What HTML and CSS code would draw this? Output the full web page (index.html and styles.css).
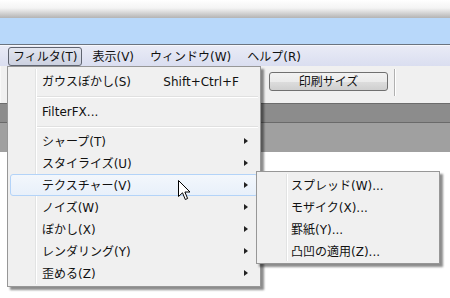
FILE: index.html
```html
<!DOCTYPE html>
<html lang="ja">
<head>
  <meta charset="UTF-8" />
  <title>フィルタ メニュー</title>
  <link rel="stylesheet" href="styles.css">
</head>
<body>
  <div class="window">
    <div class="frame-edge"></div>
    <div class="banner"></div>

    <div class="menubar">
      <span class="menubar-item open">フィルタ(T)</span>
      <span class="menubar-item">表示(V)</span>
      <span class="menubar-item">ウィンドウ(W)</span>
      <span class="menubar-item">ヘルプ(R)</span>
    </div>

    <div class="toolbar">
      <button class="tool-btn">印刷サイズ</button>
      <span class="tool-sep"></span>
    </div>

    <div class="ruler">
      <div class="ruler-top"></div>
      <div class="ruler-bottom"></div>
    </div>

    <div class="canvas"></div>

    <!-- dropdown of フィルタ -->
    <div class="menu main-menu">
      <div class="menu-item">
        <span class="label">ガウスぼかし(S)</span>
        <span class="shortcut">Shift+Ctrl+F</span>
      </div>
      <div class="menu-sep"></div>
      <div class="menu-item"><span class="label">FilterFX...</span></div>
      <div class="menu-sep"></div>
      <div class="menu-item has-sub"><span class="label">シャープ(T)</span></div>
      <div class="menu-item has-sub"><span class="label">スタイライズ(U)</span></div>
      <div class="menu-item has-sub active"><span class="label">テクスチャー(V)</span></div>
      <div class="menu-item has-sub"><span class="label">ノイズ(W)</span></div>
      <div class="menu-item has-sub"><span class="label">ぼかし(X)</span></div>
      <div class="menu-item has-sub"><span class="label">レンダリング(Y)</span></div>
      <div class="menu-item has-sub"><span class="label">歪める(Z)</span></div>
    </div>

    <!-- テクスチャー submenu -->
    <div class="menu sub-menu">
      <div class="menu-item"><span class="label">スプレッド(W)...</span></div>
      <div class="menu-item"><span class="label">モザイク(X)...</span></div>
      <div class="menu-item"><span class="label">罫紙(Y)...</span></div>
      <div class="menu-item"><span class="label">凸凹の適用(Z)...</span></div>
    </div>

    <svg class="cursor" width="13" height="21" viewBox="0 0 13 21">
      <path d="M0.5 0.5 L0.5 16.5 L4.5 12.8 L7.3 19.5 L9.6 18.5 L6.9 12 L12 12 Z" fill="#fff" stroke="#000" stroke-width="1" stroke-linejoin="miter"/>
    </svg>
  </div>
</body>
</html>
```

FILE: styles.css
```css
* {
  margin: 0;
  padding: 0;
  box-sizing: border-box;
}

body {
  font-family: "DejaVu Sans", "Noto Sans CJK JP", sans-serif;
  font-size: 12px;
  color: #111;
  background: #fff;
  overflow: hidden;
}

.window {
  position: relative;
  width: 450px;
  height: 298px;
  display: flex;
  flex-direction: column;
}

.frame-edge {
  height: 18px;
  background: linear-gradient(#ffffff 0%, #f4f4f4 45%, #b4b4b4 100%);
}

.banner {
  height: 27px;
  background: #b8d8fa;
  border-bottom: 1px solid #6b7480;
}

.menubar {
  height: 21px;
  display: flex;
  align-items: center;
  padding-left: 8px;
  border-top: 1px solid #f6f8fc;
  background: linear-gradient(#e9ebf6, #dadef0);
}

.menubar-item {
  height: 19px;
  line-height: 18px;
  padding: 0 4px 0 4px;
  margin-right: 6px;
  border: 1px solid transparent;
}

.menubar-item.open {
  border-color: #5f6470;
  border-radius: 3px;
  background: linear-gradient(#e3e6f0, #ccd1e0);
  margin-right: 5px;
}

.toolbar {
  height: 37px;
  display: flex;
  align-items: center;
  padding-left: 268px;
  background: #f0f0f0;
  border-left: 1px solid #f8f8f8;
}

.tool-btn {
  width: 119px;
  height: 19px;
  margin-top: -6px;
  font-family: inherit;
  font-size: 12px;
  line-height: 16px;
  color: #111;
  border: 1px solid #707070;
  border-radius: 3px;
  background: linear-gradient(#f2f2f2 0%, #ebebeb 50%, #dddddd 51%, #cfcfcf 100%);
}

.tool-sep {
  width: 1px;
  height: 27px;
  margin-left: 6px;
  margin-top: -4px;
  background: #b0b0b0;
  box-shadow: 1px 0 0 #fff;
}

.ruler {
  height: 49px;
}

.ruler-top {
  height: 20px;
  background: #8c8c8c;
  border-top: 1px solid #6c6c6c;
  border-bottom: 1px solid #6a6a6a;
}

.ruler-bottom {
  height: 29px;
  background: #a0a0a0;
}

.canvas {
  flex: 1;
  background: #fff;
}

/* popup menus */
.menu {
  position: absolute;
  padding: 2px;
  background: #f0f0f0;
  border: 1px solid #979797;
  box-shadow: 3px 3px 2px rgba(0, 0, 0, 0.45);
}

.menu::before {
  content: '';
  position: absolute;
  top: 2px;
  bottom: 2px;
  width: 1px;
  background: #e2e3e3;
  box-shadow: 1px 0 0 #fff;
}

.main-menu {
  left: 7px;
  top: 66px;
  width: 254px;
  height: 221px;
  padding-top: 3px;
  padding-bottom: 1px;
}

.main-menu::before {
  left: 27px;
}

.sub-menu {
  left: 256px;
  top: 171px;
  width: 184px;
  height: 93px;
}

.sub-menu::before {
  left: 29px;
}

.menu-item {
  position: relative;
  height: 22px;
  display: flex;
  align-items: center;
  padding-left: 31px;
  padding-right: 18px;
  padding-top: 2px;
  line-height: 18px;
  border: 1px solid transparent;
  border-radius: 3px;
}

.menu-item .label {
  flex: 1;
}

.menu-item.has-sub::after {
  content: '';
  position: absolute;
  right: 9px;
  top: 7px;
  border-left: 4px solid #222;
  border-top: 3.5px solid transparent;
  border-bottom: 3.5px solid transparent;
}

.menu-item.active {
  border-color: #b3d3f8;
  background: linear-gradient(#f3f7fc, #e8f0fa);
}

.menu-sep {
  height: 8px;
  margin-left: 26px;
  display: flex;
  align-items: center;
}

.menu-sep::before {
  content: '';
  flex: 1;
  height: 1px;
  background: #e0e0e0;
  box-shadow: 0 1px 0 #fff;
}

.cursor {
  position: absolute;
  left: 178px;
  top: 180px;
}
```
